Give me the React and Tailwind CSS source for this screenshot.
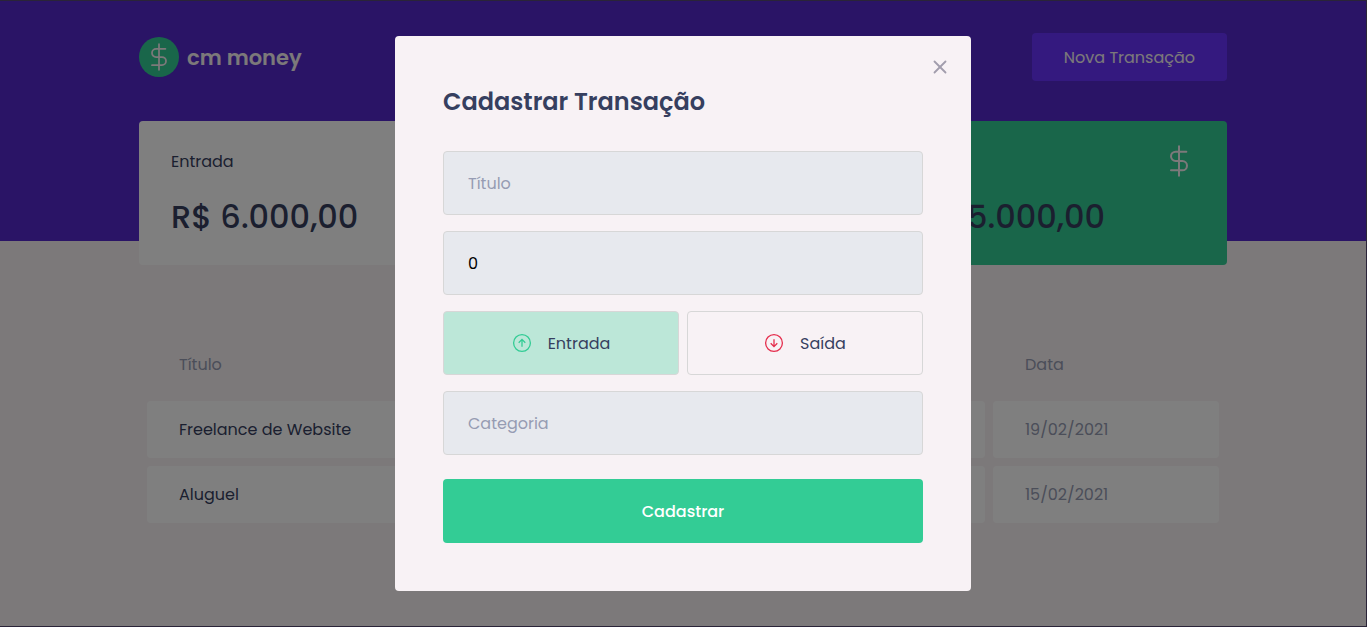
import React from "react";
import { X } from "lucide-react";

const transactions = [
  { title: "Freelance de Website", value: "R$ 6.000,00", category: "Dev", date: "19/02/2021" },
  { title: "Aluguel", value: "- R$ 1.000,00", category: "Casa", date: "15/02/2021" },
];

function Dollar({ className }) {
  return (
    <svg viewBox="0 0 24 24" fill="none" stroke="currentColor" strokeWidth="1.5" strokeLinecap="round" className={className} aria-hidden="true">
      <path d="M12 1V23M17.5 5H9.5a3.5 3.5 0 0 0 0 7h5a3.5 3.5 0 0 1 0 7H6" />
    </svg>
  );
}

function ArrowCircle({ down, className }) {
  return (
    <svg viewBox="0 0 20 20" fill="none" stroke="currentColor" strokeWidth="1.3" className={className} aria-hidden="true">
      <circle cx="10" cy="10" r="8.4" />
      <path d={down ? "M10 6.2V13.4M6.7 10.3L10 13.6L13.3 10.3" : "M10 13.8V6.6M6.7 9.7L10 6.4L13.3 9.7"} />
    </svg>
  );
}

function Card({ label, value, icon, className }) {
  return (
    <article className={`rounded px-8 py-6 ${className}`}>
      <header className="flex h-8 items-center justify-between">
        <p>{label}</p>
        {icon}
      </header>
      <strong className="mt-4 block whitespace-nowrap text-[32px] leading-[48px] font-medium">{value}</strong>
    </article>
  );
}

function Modal() {
  const field =
    "block h-16 w-full rounded border border-[#d7d7d7] bg-[#e7e9ee] px-6 text-base text-black placeholder:text-[#969cb3]";
  const type = "flex h-16 items-center justify-center gap-4 rounded border border-[#d7d7d7] text-[#363f5f]";
  return (
    <div className="absolute inset-0 flex items-center justify-center bg-black/50">
      <section role="dialog" aria-modal="true" aria-labelledby="modal-title" className="relative w-full max-w-[576px] rounded bg-[#f8f2f5] p-12">
        <button type="button" aria-label="Fechar" className="absolute top-5 right-5 text-[#a29dac]">
          <X className="size-[22px]" strokeWidth={2} />
        </button>
        <form onSubmit={(e) => e.preventDefault()}>
          <h2 id="modal-title" className="mb-8 text-2xl leading-[35px] font-semibold text-[#363f5f]">Cadastrar Transação</h2>
          <div className="flex flex-col gap-4">
            <input aria-label="Título" placeholder="Título" className={field} />
            <input aria-label="Valor" defaultValue="0" inputMode="decimal" className={field} />
            <div className="grid grid-cols-2 gap-2">
              <button type="button" aria-pressed="true" className={`${type} bg-[#bce7d8]`}>
                <ArrowCircle className="size-5 text-[#33cc95]" />
                Entrada
              </button>
              <button type="button" aria-pressed="false" className={type}>
                <ArrowCircle down className="size-5 text-[#e52e4d]" />
                Saída
              </button>
            </div>
            <input aria-label="Categoria" placeholder="Categoria" className={field} />
          </div>
          <button type="submit" className="mt-6 h-16 w-full rounded bg-[#33cc95] font-medium text-white">Cadastrar</button>
        </form>
      </section>
    </div>
  );
}

export default function App() {
  return (
    <div className="relative min-h-screen border-y border-r border-[#2a2438] bg-[#f8f2f5] font-[Poppins,Inter,sans-serif] text-base leading-[25px] text-[#363f5f]">
      <header className="bg-[#5429cc]">
        <div className="mx-auto flex max-w-[1120px] items-center justify-between px-4 pt-8 pb-40">
          <div className="flex items-center gap-2">
            <span className="flex size-10 items-center justify-center rounded-full bg-[#33cc95] text-[#f8f2f5]">
              <Dollar className="size-7" />
            </span>
            <span className="text-[21px] font-semibold text-[#f8f2f5]">cm money</span>
          </div>
          <button type="button" className="h-12 rounded bg-[#6933ff] px-8 text-[#f8f2f5]">Nova Transação</button>
        </div>
      </header>
      <main className="mx-auto max-w-[1120px] px-4">
        <section className="-mt-30 grid grid-cols-3 gap-8">
          <Card label="Entrada" value="R$ 6.000,00" className="bg-white" icon={<ArrowCircle className="size-8 text-[#33cc95]" />} />
          <Card label="Saída" value="- R$ 1.000,00" className="bg-white" icon={<ArrowCircle down className="size-8 text-[#e52e4d]" />} />
          <Card label="Total" value="R$ 5.000,00" className="bg-[#33cc95]" icon={<Dollar className="size-8 text-[#f8f2f5]" />} />
        </section>
        <table className="mt-16 w-full table-fixed border-separate border-spacing-2 text-left leading-6 text-[#969cb3]">
          <colgroup>
            <col />
            <col className="w-[230px]" />
            <col className="w-[230px]" />
            <col className="w-[226px]" />
          </colgroup>
          <thead>
            <tr>
              {["Título", "Valor", "Categoria", "Data"].map((h) => (
                <th key={h} className="h-14 px-8 font-normal">{h}</th>
              ))}
            </tr>
          </thead>
          <tbody>
            {transactions.map((t) => (
              <tr key={t.title}>
                <td className="h-[57px] rounded bg-white px-8 text-[#363f5f]">{t.title}</td>
                <td className="rounded bg-white px-8 whitespace-nowrap">{t.value}</td>
                <td className="rounded bg-white px-8">{t.category}</td>
                <td className="rounded bg-white px-8">{t.date}</td>
              </tr>
            ))}
          </tbody>
        </table>
      </main>
      <Modal />
    </div>
  );
}
